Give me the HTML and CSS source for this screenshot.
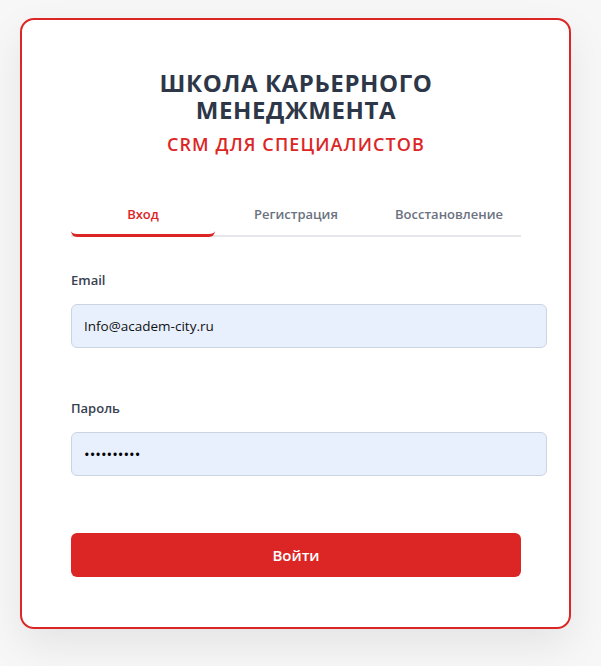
FILE: index.html
```html
<!DOCTYPE html>
<html lang="ru">
<head>
<meta charset="utf-8">
<title>Школа карьерного менеджмента — вход</title>
<link rel="stylesheet" href="styles.css">
</head>
<body>
<main class="page">
  <section class="card">
    <header class="brand">
      <h1 class="brand-title">ШКОЛА КАРЬЕРНОГО МЕНЕДЖМЕНТА</h1>
      <p class="brand-sub">CRM ДЛЯ СПЕЦИАЛИСТОВ</p>
    </header>

    <nav class="tabs">
      <button class="tab tab-active" type="button">Вход</button>
      <button class="tab" type="button">Регистрация</button>
      <button class="tab" type="button">Восстановление</button>
    </nav>

    <form class="form">
      <div class="field">
        <label class="field-label" for="email">Email</label>
        <input class="field-input" id="email" type="email" value="Info@academ-city.ru">
      </div>
      <div class="field">
        <label class="field-label" for="password">Пароль</label>
        <input class="field-input field-secret" id="password" type="password" value="1234567890">
      </div>
      <button class="submit" type="button">Войти</button>
    </form>
  </section>
</main>
</body>
</html>
```

FILE: styles.css
```css
* {
  box-sizing: border-box;
}

html,
body {
  margin: 0;
  padding: 0;
}

body {
  background: #f7f7f7;
  font-family: "Open Sans", "Noto Sans", sans-serif;
  color: #2d3748;
  min-height: 666px;
}

.page {
  padding: 18px 30px 0 20px;
}

.card {
  width: 551px;
  background: #ffffff;
  border: 2px solid #dc2626;
  border-radius: 14px;
  box-shadow: 0 16px 40px rgba(0, 0, 0, 0.08);
  padding: 49px 48px 50px 49px;
}

/* Heading block */
.brand {
  text-align: center;
}

.brand-title {
  margin: 0;
  font-size: 24px;
  line-height: 27px;
  font-weight: 700;
  letter-spacing: 0.6px;
  color: #2d3748;
  padding: 0 40px;
}

.brand-sub {
  margin: 10px 0 0;
  font-size: 18px;
  line-height: 23px;
  font-weight: 600;
  letter-spacing: 1.1px;
  color: #dc2626;
}

/* Tabs */
.tabs {
  display: flex;
  gap: 9px;
  margin-top: 43px;
  border-bottom: 2px solid #e5e7eb;
}

.tab {
  flex: 1;
  background: none;
  border: 0;
  border-bottom: 3px solid transparent;
  border-radius: 0 0 6px 6px;
  margin-bottom: -2px;
  padding: 6px 0 11px;
  font-family: inherit;
  font-size: 13px;
  line-height: 18px;
  font-weight: 600;
  color: #6b7280;
  cursor: pointer;
}

.tab-active {
  color: #dc2626;
  border-bottom-color: #dc2626;
}

/* Form */
.form {
  margin-top: 33px;
}

.field + .field {
  margin-top: 50px;
}

.field-label {
  display: block;
  font-size: 13px;
  line-height: 20px;
  font-weight: 600;
  color: #374151;
  margin-bottom: 14px;
}

.field-input {
  box-sizing: content-box;
  display: block;
  width: 100%;
  height: 42px;
  padding: 0 12px;
  border: 1px solid #cbd5e1;
  border-radius: 6px;
  background: #e8f0fe;
  font-family: inherit;
  font-size: 13.5px;
  color: #111111;
  outline: none;
}

.field-secret {
  font-size: 15px;
  color: #000000;
}

.submit {
  display: block;
  width: 100%;
  height: 44px;
  margin-top: 57px;
  border: 0;
  border-radius: 6px;
  background: #dc2626;
  color: #ffffff;
  font-family: inherit;
  font-size: 15px;
  font-weight: 600;
  cursor: pointer;
}
```
